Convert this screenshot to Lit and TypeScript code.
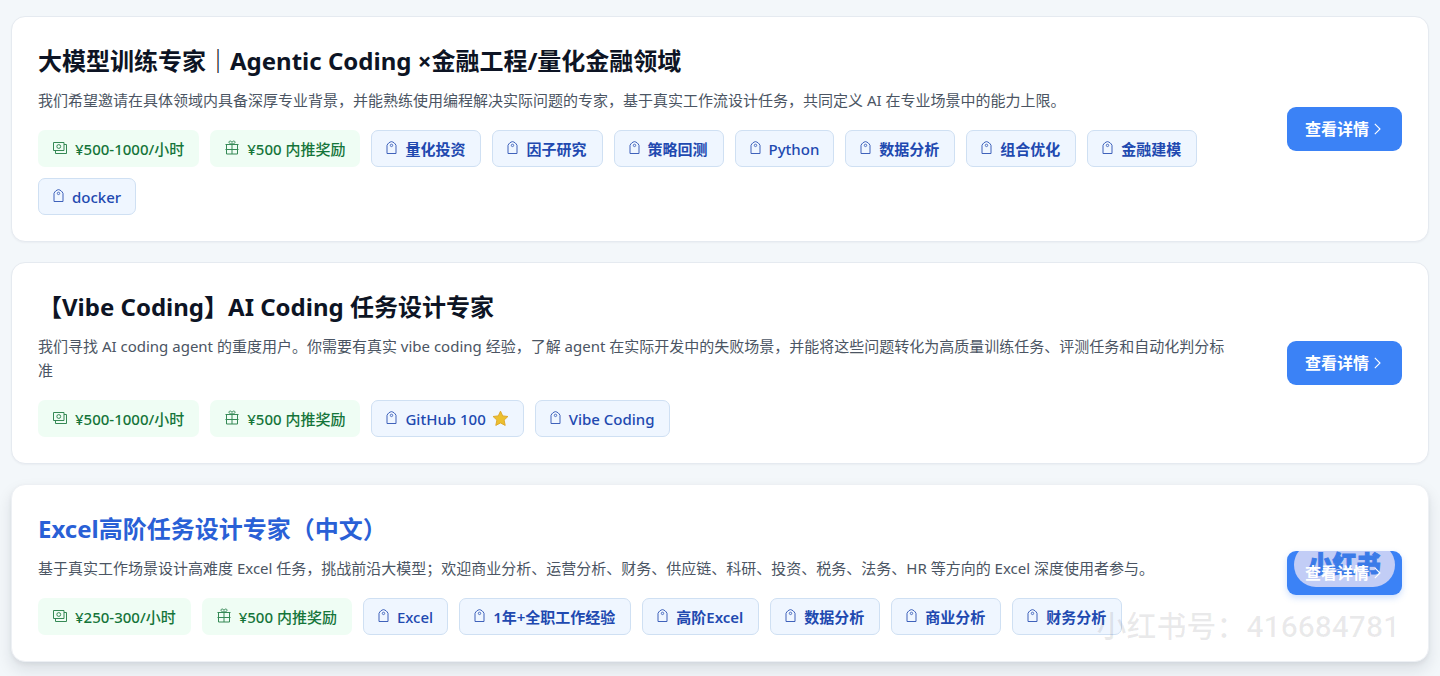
import { LitElement, html, svg, css, nothing } from "lit";
import { customElement, property } from "lit/decorators.js";

interface Job {
  title: string;
  description: string;
  pay: string;
  bonus: string;
  tags: string[];
  active?: boolean;
}

const JOBS: Job[] = [
  {
    title: "大模型训练专家｜Agentic Coding ×金融工程/量化金融领域",
    description:
      "我们希望邀请在具体领域内具备深厚专业背景，并能熟练使用编程解决实际问题的专家，基于真实工作流设计任务，共同定义 AI 在专业场景中的能力上限。",
    pay: "¥500-1000/小时",
    bonus: "¥500 内推奖励",
    tags: ["量化投资", "因子研究", "策略回测", "Python", "数据分析", "组合优化", "金融建模", "docker"],
  },
  {
    title: "【Vibe Coding】AI Coding 任务设计专家",
    description:
      "我们寻找 AI coding agent 的重度用户。你需要有真实 vibe coding 经验，了解 agent 在实际开发中的失败场景，并能将这些问题转化为高质量训练任务、评测任务和自动化判分标准",
    pay: "¥500-1000/小时",
    bonus: "¥500 内推奖励",
    tags: ["GitHub 100 ⭐", "Vibe Coding"],
  },
  {
    title: "Excel高阶任务设计专家（中文）",
    description:
      "基于真实工作场景设计高难度 Excel 任务，挑战前沿大模型；欢迎商业分析、运营分析、财务、供应链、科研、投资、税务、法务、HR 等方向的 Excel 深度使用者参与。",
    pay: "¥250-300/小时",
    bonus: "¥500 内推奖励",
    tags: ["Excel", "1年+全职工作经验", "高阶Excel", "数据分析", "商业分析", "财务分析"],
    active: true,
  },
];

const icon = (w: number, h: number, body: unknown) => html`<svg
  class="icon"
  width=${w}
  height=${h}
  viewBox="0 0 ${w} ${h}"
  fill="none"
  stroke="currentColor"
  aria-hidden="true"
>${body}</svg>`;

const cashIcon = icon(14, 12, svg`
  <path d="M.5.5h10.500v8H.5z"/>
  <circle cx="5.750" cy="4.500" r="1.900"/>
  <path d="M11 2.500h2.500v9h-11v-3"/>`);

const giftIcon = icon(14, 15, svg`
  <path d="M.5 4.500h13M1.500 4.500v9.500h11V4.500M7 3v11M.5 9.500h13"/>
  <path d="M7 4.300C5 4 4 3.200 4 2.200 4 .6 6.400.6 7 2.400 7.600.6 10 .6 10 2.200c0 1-1 1.800-3 2.100z"/>`);

const tagIcon = icon(11, 13, svg`
  <path d="M1 12.500V4.300C1.900 2.400 3.500 1 5.500.6c2 .4 3.600 1.800 4.500 3.700v8.200z"/>
  <circle cx="5.500" cy="4.400" r="1.200" stroke-width=".9"/>`);

const chevron = icon(7, 12, svg`<path d="M.8.8 6 6 .8 11.200" stroke-width="1.100"/>`);

const star = html`<svg class="star" width="17" height="17" viewBox="0 0 17 17" role="img" aria-label="⭐">
  <path
    d="M8.500 1.200 10.700 5.900 15.900 6.500 12.100 10.100 13.200 15.400 8.500 12.900 3.800 15.400 4.900 10.100 1.100 6.500 6.300 5.900z"
    fill="#ecc02f" stroke="#dfa92c" stroke-linejoin="round"/>
</svg>`;

@customElement("job-card")
export class JobCard extends LitElement {
  @property({ attribute: false }) job!: Job;

  static styles = css`
    :host {
      display: block;
    }
    .card {
      position: relative;
      display: flex;
      align-items: center;
      gap: 56px;
      padding: 26px;
      background: #fff;
      border: 1px solid #e5eaf0;
      border-radius: 14px;
      box-shadow: 0 1px 2px rgba(15, 23, 42, 0.04);
    }
    .card.active {
      border-color: #edf0f4;
      box-shadow: 0 8px 16px rgba(15, 23, 42, 0.11), 0 2px 4px rgba(15, 23, 42, 0.05);
    }
    .body {
      flex: 1;
      min-width: 0;
    }
    .title {
      margin: 0 0 9px;
      font-size: 24px;
      line-height: 36px;
      font-weight: 700;
      color: #0d1424;
    }
    .active .title {
      color: #2960d6;
    }
    .description {
      margin: 0 0 18px;
      font-size: 15px;
      line-height: 24px;
      color: #4b5563;
    }
    .tags {
      display: flex;
      flex-wrap: wrap;
      gap: 11px;
      margin: 0;
      padding: 0;
      list-style: none;
    }
    .tag {
      display: flex;
      align-items: center;
      gap: 8px;
      height: 37px;
      padding: 0 15px;
      box-sizing: border-box;
      border-radius: 7px;
      font-size: 15px;
      line-height: 24px;
      font-weight: 500;
      white-space: nowrap;
      color: #15753a;
      background: #effdf4;
    }
    .tag.skill {
      padding: 0 15px 0 14px;
      border: 1px solid #cfe0f3;
      font-weight: 600;
      color: #2149b0;
      background: #eff6ff;
    }
    .tag.skill.latin {
      padding: 0 14px;
      font-weight: 500;
    }
    .tag .icon {
      margin-bottom: 2px;
      opacity: 0.85;
    }
    .label {
      display: flex;
      align-items: center;
      gap: 6px;
    }
    .icon,
    .star {
      display: block;
      flex: none;
    }
    .more {
      position: relative;
      flex: none;
      display: flex;
      align-items: center;
      gap: 5px;
      min-width: 115px;
      height: 44px;
      padding: 0 18px;
      border: 0;
      border-radius: 9px;
      overflow: hidden;
      font: inherit;
      font-size: 16px;
      line-height: 24px;
      font-weight: 600;
      color: #fff;
      background: #3b82f6;
      cursor: pointer;
    }
    .active .more {
      box-shadow: 0 3px 6px rgba(59, 130, 246, 0.25);
    }
    .more .text,
    .more .icon {
      position: relative;
    }
    .stamp {
      position: absolute;
      top: -8px;
      left: 7px;
      right: 7px;
      height: 44px;
      border-radius: 22px;
      background: #c2cdf6;
      color: #3b7be8;
      font-size: 24px;
      line-height: 42px;
      font-weight: 900;
      text-align: center;
      -webkit-text-stroke: 1px #3b7be8;
    }
    .watermark {
      position: absolute;
      right: 28px;
      bottom: 12px;
      font-family: Roboto, "Noto Sans CJK SC", sans-serif;
      font-size: 30px;
      line-height: 44px;
      font-weight: 500;
      color: rgba(30, 30, 40, 0.09);
      white-space: nowrap;
      pointer-events: none;
    }
  `;

  private label(text: string) {
    return text.endsWith("⭐")
      ? html`<span class="label">${text.replace(" ⭐", "")}${star}</span>`
      : html`<span class="label">${text}</span>`;
  }

  private skill(text: string) {
    const latin = /^[A-Za-z]/.test(text) ? "latin" : "";
    return html`<li class="tag skill ${latin}">${tagIcon}${this.label(text)}</li>`;
  }

  render() {
    const { title, description, pay, bonus, tags, active } = this.job;
    return html`
      <article class="card ${active ? "active" : ""}">
        <div class="body">
          <h2 class="title">${title}</h2>
          <p class="description">${description}</p>
          <ul class="tags">
            <li class="tag">${cashIcon}${this.label(pay)}</li>
            <li class="tag">${giftIcon}${this.label(bonus)}</li>
            ${tags.map((t) => this.skill(t))}
          </ul>
        </div>
        <button class="more" type="button">
          ${active ? html`<span class="stamp" aria-hidden="true">小红书</span>` : nothing}
          <span class="text">查看详情</span>${chevron}
        </button>
        ${active ? html`<div class="watermark">小红书号：416684781</div>` : nothing}
      </article>
    `;
  }
}

@customElement("app-root")
export class AppRoot extends LitElement {
  static styles = css`
    :host {
      display: block;
      min-height: 100vh;
      box-sizing: border-box;
      padding: 16px 11px 13px;
      background: #f3f7fa;
      font-family: "Noto Sans", "Noto Sans CJK SC", sans-serif;
    }
    .list {
      display: flex;
      flex-direction: column;
      gap: 20px;
    }
  `;

  render() {
    return html`<main class="list">${JOBS.map((job) => html`<job-card .job=${job}></job-card>`)}</main>`;
  }
}
